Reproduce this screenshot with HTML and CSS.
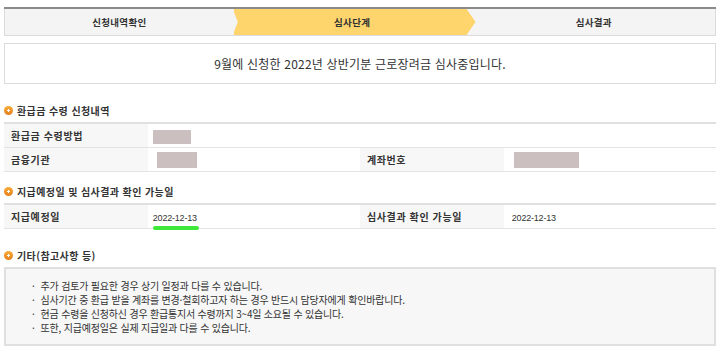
FILE: index.html
```html
<!DOCTYPE html>
<html lang="ko">
<head>
  <meta charset="UTF-8">
  <meta name="viewport" content="width=device-width, initial-scale=1.0">
  <title>심사단계</title>
  <link rel="stylesheet" href="styles.css">
</head>
<body>
  <ol class="steps">
    <li class="step step-done">신청내역확인</li>
    <li class="step step-on">심사단계</li>
    <li class="step">심사결과</li>
  </ol>

  <div class="notice">9월에 신청한 2022년 상반기분 근로장려금 심사중입니다.</div>

  <h2 class="sec-title">환급금 수령 신청내역</h2>
  <table class="info">
    <colgroup>
      <col class="c-label"><col class="c-value"><col class="c-label"><col class="c-value">
    </colgroup>
    <tr>
      <th>환급금 수령방법</th>
      <td colspan="3"><span class="mask mask-sm"></span></td>
    </tr>
    <tr>
      <th>금융기관</th>
      <td><span class="mask mask-md"></span></td>
      <th>계좌번호</th>
      <td><span class="mask mask-lg"></span></td>
    </tr>
  </table>

  <h2 class="sec-title sec-tight">지급예정일 및 심사결과 확인 가능일</h2>
  <table class="info">
    <colgroup>
      <col class="c-label"><col class="c-value"><col class="c-label"><col class="c-value">
    </colgroup>
    <tr>
      <th>지급예정일</th>
      <td><span class="date marked">2022-12-13</span></td>
      <th>심사결과 확인 가능일</th>
      <td><span class="date">2022-12-13</span></td>
    </tr>
  </table>

  <h2 class="sec-title">기타(참고사항 등)</h2>
  <ul class="notes">
    <li>추가 검토가 필요한 경우 상기 일정과 다를 수 있습니다.</li>
    <li>심사기간 중 환급 받을 계좌를 변경·철회하고자 하는 경우 반드시 담당자에게 확인바랍니다.</li>
    <li>현금 수령을 신청하신 경우 환급통지서 수령까지 3~4일 소요될 수 있습니다.</li>
    <li>또한, 지급예정일은 실제 지급일과 다를 수 있습니다.</li>
  </ul>
</body>
</html>
```

FILE: styles.css
```css
body {
  font-family: "Noto Sans CJK KR", "Noto Sans", sans-serif;
  color: #333;
  background-color: #ffffff;
  margin: 0;
  padding: 7px 4px;
}

/* 진행 단계 */
.steps {
  display: flex;
  list-style: none;
  margin: 0;
  padding: 0;
  border-top: 2px solid #8a8a8a;
  border-bottom: 1px solid #dcdcdc;
  height: 26px;
}
.step {
  position: relative;
  flex: 1;
  display: flex;
  align-items: center;
  justify-content: center;
  background-color: #f4f4f4;
  font-size: 9.5px;
  font-weight: bold;
  letter-spacing: 0.3px;
  color: #333;
  border-right: 1px solid #dcdcdc;
}
.step:first-child {
  border-left: 1px solid #dcdcdc;
}
.step-done {
  z-index: 2;
  border-right: none;
}
.step-done::after {
  content: "";
  position: absolute;
  top: 0;
  right: -4px;
  width: 5px;
  height: 100%;
  background-color: #f4f4f4;
  clip-path: polygon(0 0, 100% 50%, 0 100%);
}
.step-on {
  z-index: 1;
  background-color: #fdd56c;
  border-right: none;
  padding-left: 4px;
}
.step-on::after {
  content: "";
  position: absolute;
  top: 0;
  right: -9px;
  width: 9px;
  height: 100%;
  background-color: #fdd56c;
  clip-path: polygon(0 0, 100% 50%, 0 100%);
}
.step:last-child {
  flex: 1.06;
  padding-left: 6px;
}

/* 안내 문구 */
.notice {
  margin-top: 7px;
  border: 1px solid #dcdcdc;
  height: 39px;
  display: flex;
  align-items: center;
  justify-content: center;
  font-size: 12px;
  letter-spacing: 0.2px;
  color: #333;
}

/* 소제목 */
.sec-title {
  display: flex;
  align-items: center;
  gap: 4px;
  margin: 18px 0 4px;
  height: 16px;
  font-size: 10px;
  font-weight: bold;
  letter-spacing: 0.4px;
  color: #333;
}
.sec-tight {
  margin-top: 11px;
}
.sec-title::before {
  content: "";
  width: 9px;
  height: 9px;
  border-radius: 50%;
  background: radial-gradient(circle at 50% 50%, #ffffff 0 1.2px, transparent 1.4px),
    linear-gradient(#f8ac3a, #e5801a);
  flex: none;
}

/* 표 */
.info {
  width: 100%;
  border-collapse: collapse;
  border-top: 2px solid #e0e0e0;
  table-layout: fixed;
}
.c-label {
  width: 143px;
}
.c-value {
  width: 211px;
}
.info th,
.info td {
  height: 23px;
  padding: 0 0 0 7px;
  border-bottom: 1px solid #e3e3e3;
  text-align: left;
  font-size: 10px;
  letter-spacing: 0.6px;
}
.info th {
  background-color: #f7f7f7;
  font-weight: bold;
  color: #333;
}
.info td {
  padding-left: 8px;
}

.mask {
  display: inline-block;
  vertical-align: middle;
  background-color: #cbbfbf;
}
.mask-sm {
  width: 38px;
  height: 14px;
  margin-left: -3px;
}
.mask-md {
  width: 40px;
  height: 16px;
  margin-left: 1px;
}
.mask-lg {
  width: 65px;
  height: 16px;
  margin-left: 2px;
}

.date {
  font-family: "Liberation Sans", Arial, sans-serif;
  font-size: 9px;
  letter-spacing: -0.2px;
  color: #333;
}
.marked {
  position: relative;
  margin-left: -3px;
}
.marked::after {
  content: "";
  position: absolute;
  left: 0;
  right: -2px;
  bottom: -7px;
  height: 4px;
  border-radius: 2px;
  background-color: #3ee83a;
}

/* 기타 */
.notes {
  list-style: none;
  margin: 0;
  padding: 10px 0 9px 26px;
  background-color: #f7f7f7;
  border: 2px solid #e0e0e0;
  font-size: 10px;
  line-height: 14px;
  letter-spacing: -0.2px;
  color: #333;
}
.notes li::before {
  content: "·";
  margin-right: 6px;
}
```
